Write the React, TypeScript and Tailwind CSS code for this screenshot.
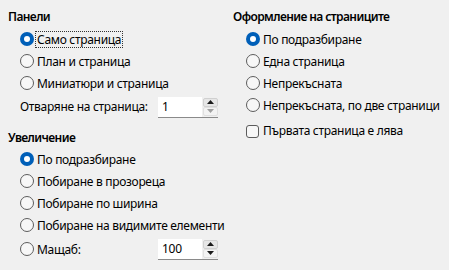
import React from 'react';

function Radio({ checked, label, focus }: { checked?: boolean; label: string; focus?: boolean }) {
  return (
    <div className="flex h-[22px] items-center whitespace-nowrap">
      {checked ? (
        <span className="flex h-[14px] w-[14px] shrink-0 items-center justify-center rounded-full bg-[#005fb8]">
          <span className="h-[6px] w-[6px] rounded-full bg-white" />
        </span>
      ) : (
        <span className="h-[14px] w-[14px] shrink-0 rounded-full border border-[#5c5c5c] bg-[#f7f7f7]" />
      )}
      <span
        className={`ml-[2px] px-[1px] leading-[15px] ${focus ? 'outline-1 outline-dotted outline-[#333]' : 'outline-1 outline-transparent'}`}
      >
        {label}
      </span>
    </div>
  );
}

function Spin({ value, minDisabled }: { value: string; minDisabled?: boolean }) {
  return (
    <div className="flex h-[21px] w-[60px] border-b border-[#8a8a8a] bg-white">
      <div className="flex flex-1 items-center pl-[4px]">{value}</div>
      <div className="flex w-[16px] flex-col bg-[#f0f0f0] py-[1px] pl-[1px]">
        <div className="flex flex-1 items-center justify-center rounded-[2px] border border-[#d0d0d0] bg-[#e6e6e6]">
          <svg width="7" height="4" viewBox="0 0 7 4">
            <path d="M0 4 L3.5 0 L7 4 Z" fill="#1a1a1a" />
          </svg>
        </div>
        <div className="flex flex-1 items-center justify-center rounded-[2px] border border-[#e0e0e0] bg-[#f3f3f3]">
          <svg width="7" height="4" viewBox="0 0 7 4">
            <path d="M0 0 L3.5 4 L7 0 Z" fill={minDisabled ? '#a0a0a0' : '#1a1a1a'} />
          </svg>
        </div>
      </div>
    </div>
  );
}

export default function App() {
  return (
    <div
      className="flex h-[270px] w-[449px] bg-[#f0f0f0] text-[12px] tracking-[-0.3px] text-black"
      style={{ fontFamily: '"Noto Sans", "Open Sans", sans-serif' }}
    >
      {/* left column */}
      <div className="w-[225px] pl-[8px] pt-[9px]">
        <div className="h-[16px] font-semibold leading-[16px] tracking-[-0.6px]">Панели</div>
        <div className="mt-[3px] pl-[12px]">
          <Radio checked focus label="Само страница" />
          <Radio label="План и страница" />
          <Radio label="Миниатюри и страница" />
          <div className="mt-[2px] flex h-[22px] items-center whitespace-nowrap">
            <span className="w-[138px]">Отваряне на страница:</span>
            <Spin value="1" minDisabled />
          </div>
        </div>

        <div className="mt-[12px] h-[16px] font-semibold leading-[16px] tracking-[-0.6px]">Увеличение</div>
        <div className="mt-[2px] pl-[12px]">
          <Radio checked label="По подразбиране" />
          <Radio label="Побиране в прозореца" />
          <Radio label="Побиране по ширина" />
          <Radio label="Побиране на видимите елементи" />
          <div className="mt-[2px] flex h-[22px] items-center">
            <div className="w-[138px]">
              <Radio label="Мащаб:" />
            </div>
            <Spin value="100" />
          </div>
        </div>
      </div>

      {/* right column */}
      <div className="flex-1 pl-[8px] pt-[9px]">
        <div className="h-[16px] whitespace-nowrap font-semibold leading-[16px] tracking-[-0.6px]">
          Оформление на страниците
        </div>
        <div className="mt-[3px] pl-[13px]">
          <Radio checked label="По подразбиране" />
          <Radio label="Една страница" />
          <Radio label="Непрекъсната" />
          <Radio label="Непрекъсната, по две страници" />
          <div className="mt-[4px] flex h-[22px] items-center whitespace-nowrap">
            <span className="h-[13px] w-[13px] rounded-[3px] border border-[#5c5c5c] bg-[#f7f7f7]" />
            <span className="ml-[4px]">Първата страница е лява</span>
          </div>
        </div>
      </div>
    </div>
  );
}
